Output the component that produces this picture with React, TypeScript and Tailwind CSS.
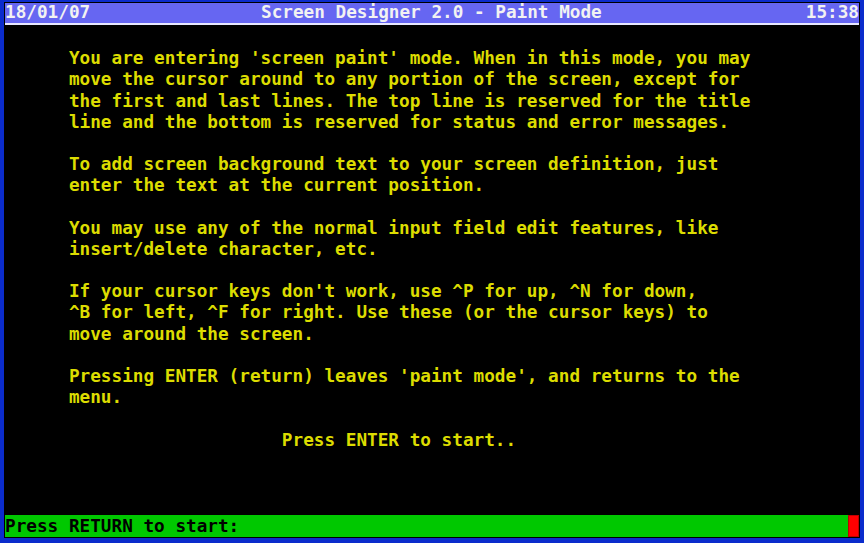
const lines: string[] = [
  '',
  "      You are entering 'screen paint' mode. When in this mode, you may",
  '      move the cursor around to any portion of the screen, except for',
  '      the first and last lines. The top line is reserved for the title',
  '      line and the bottom is reserved for status and error messages.',
  '',
  '      To add screen background text to your screen definition, just',
  '      enter the text at the current position.',
  '',
  '      You may use any of the normal input field edit features, like',
  '      insert/delete character, etc.',
  '',
  "      If your cursor keys don't work, use ^P for up, ^N for down,",
  '      ^B for left, ^F for right. Use these (or the cursor keys) to',
  '      move around the screen.',
  '',
  "      Pressing ENTER (return) leaves 'paint mode', and returns to the",
  '      menu.',
  '',
  '                          Press ENTER to start..',
];

export default function App() {
  return (
    <div
      className="w-[864px] h-[543px] bg-[#0b2ccc] pt-[2px] pl-[4px] pr-[4px] pb-[5px] overflow-hidden"
      style={{ fontFamily: '"DejaVu Sans Mono", "Liberation Mono", monospace' }}
    >
      <div className="w-full h-full bg-black p-[1px] flex flex-col text-[17.7px] font-bold">
        {/* title line */}
        <div className="h-[22px] bg-[#6666f2] flex items-start whitespace-pre text-[#f2f2f2] border-b-2 border-[#e8e8ff] pb-[1px]">
          <div className="h-[19px] leading-[19px] w-full flex justify-between relative">
            <span>18/01/07</span>
            <span className="absolute left-[256px]">Screen Designer 2.0 - Paint Mode</span>
            <span>15:38</span>
          </div>
        </div>

        {/* body */}
        <div className="flex flex-col pt-[2px] text-[#dcdc00]">
          {lines.map((l, i) => (
            <div key={i} className="h-[21.2px] leading-[21.2px] whitespace-pre">
              {l}
            </div>
          ))}
        </div>

        {/* status line */}
        <div className="mt-auto h-[22px] flex">
          <div className="flex-1 bg-[#00c800] text-black leading-[22px] whitespace-pre">
            Press RETURN to start:
          </div>
          <div className="w-[11px] bg-[#ff0000] border border-[#c00000]" />
        </div>
      </div>
    </div>
  );
}
